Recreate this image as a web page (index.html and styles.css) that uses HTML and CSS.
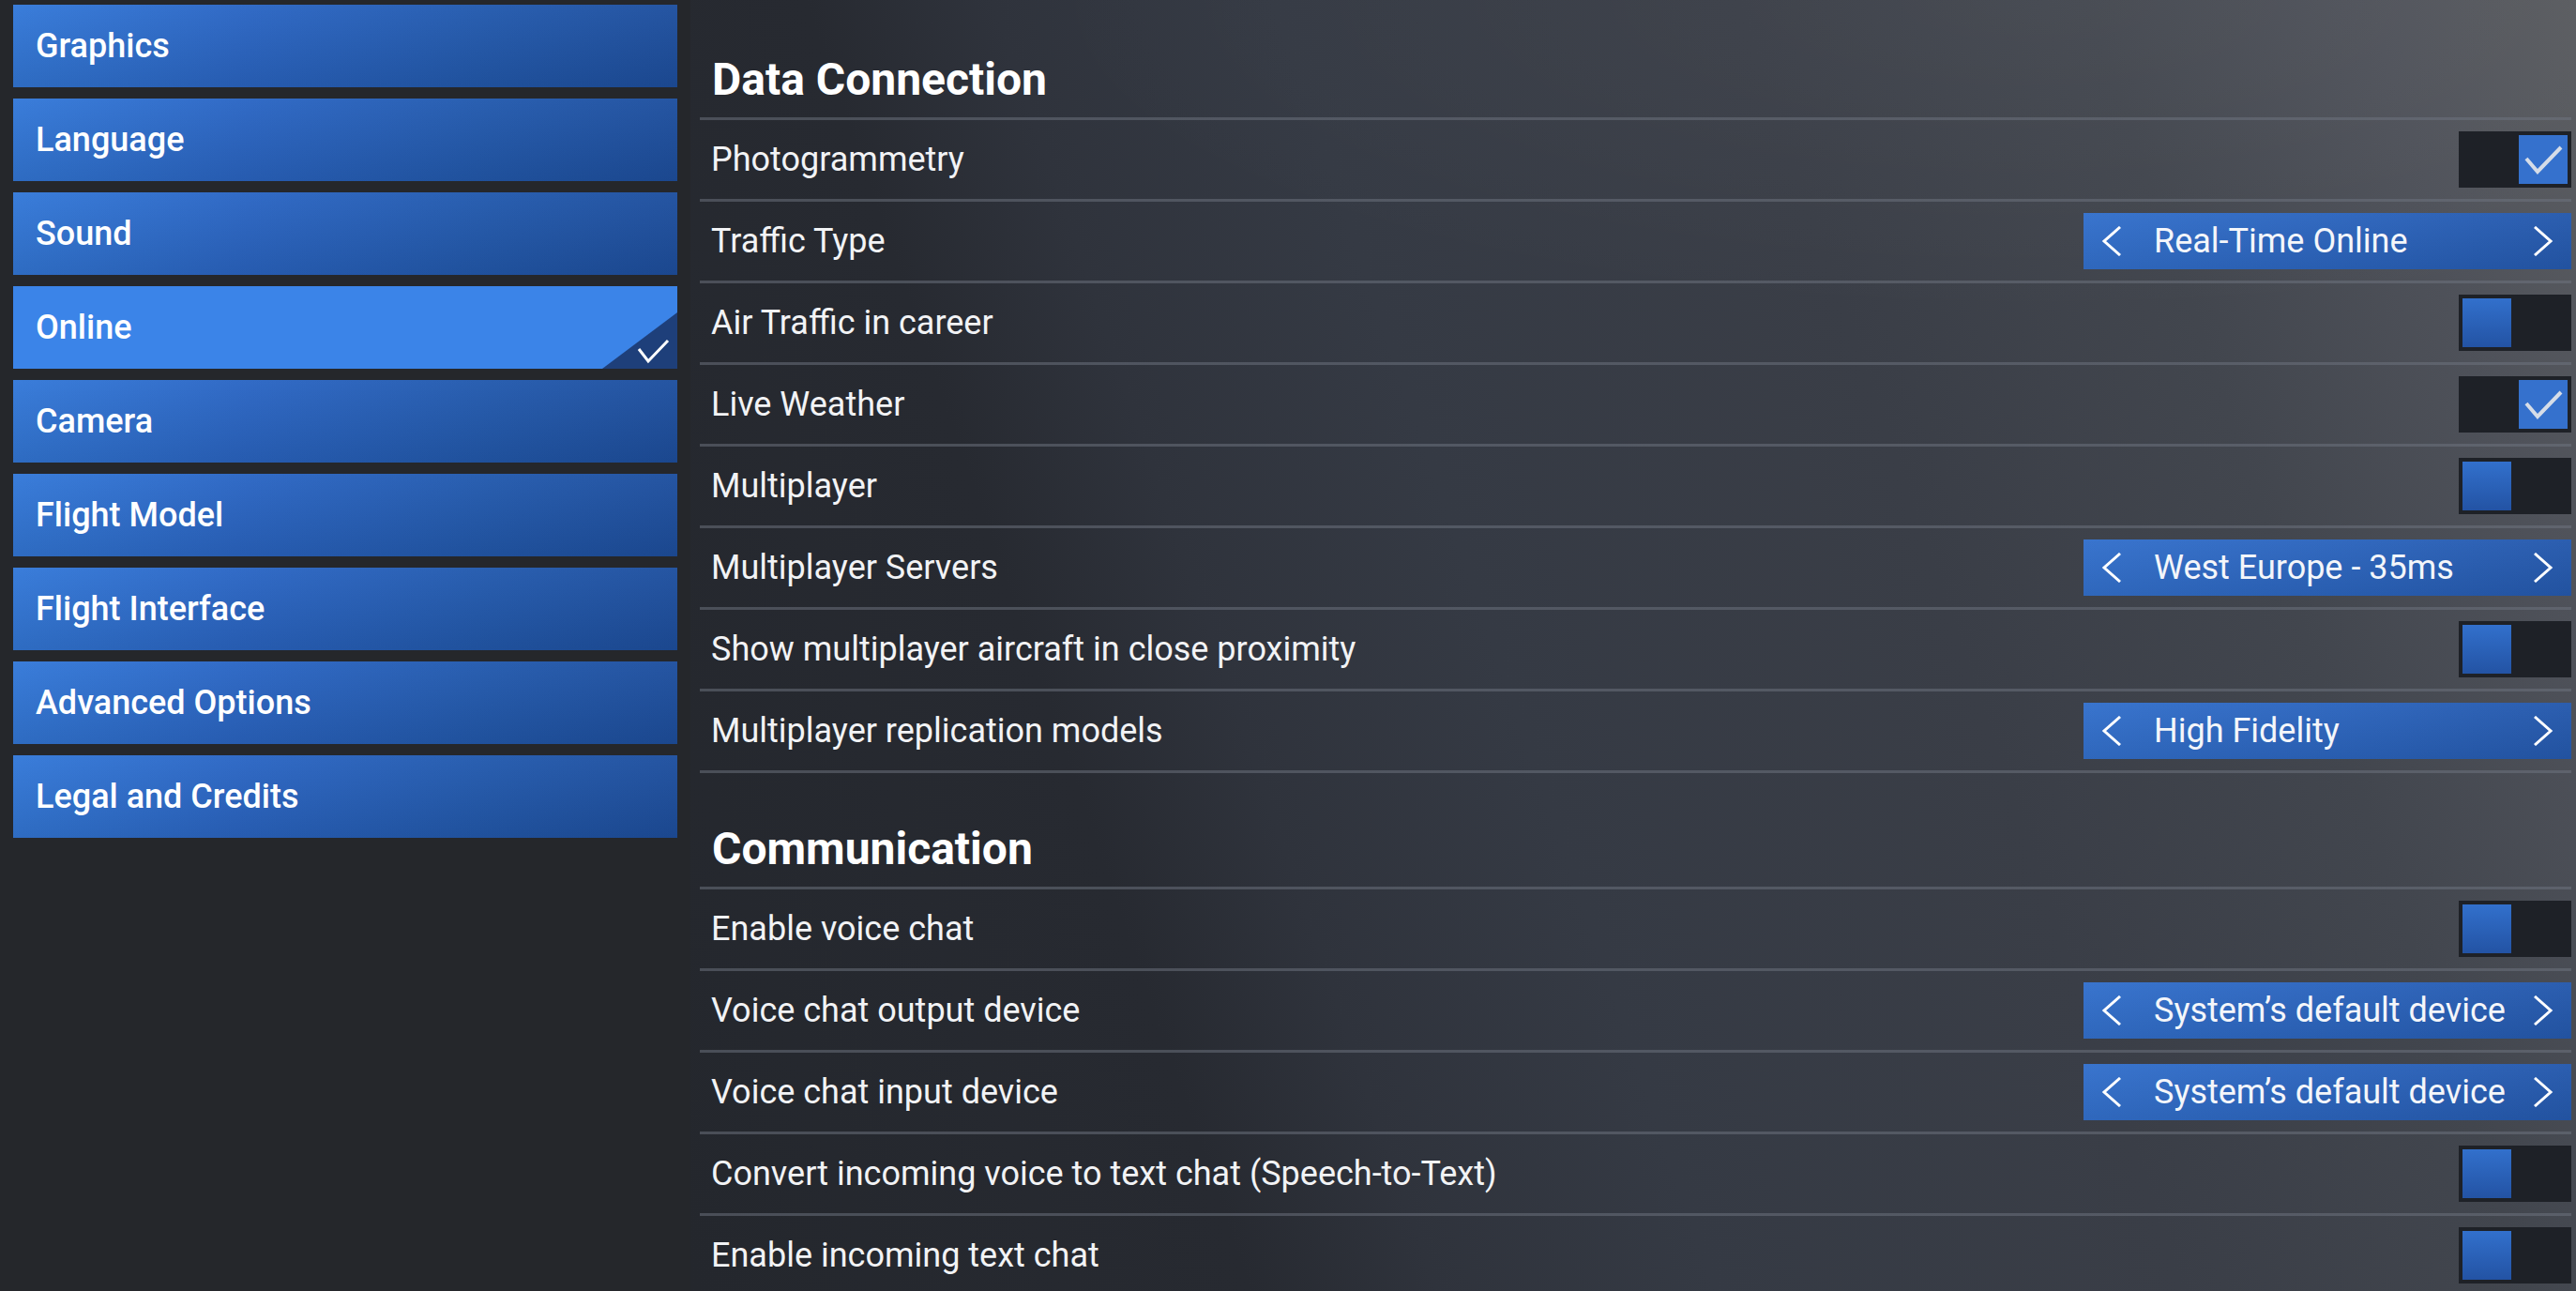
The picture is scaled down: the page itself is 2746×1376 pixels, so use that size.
FILE: index.html
```html
<!DOCTYPE html>
<html lang="en">
<head>
<meta charset="utf-8">
<title>Settings - Online</title>
<link rel="stylesheet" href="styles.css">
</head>
<body>
<div class="app">
  <nav class="sidebar">
    <div class="nav-item">Graphics</div>
    <div class="nav-item">Language</div>
    <div class="nav-item">Sound</div>
    <div class="nav-item active">Online
      <svg class="corner" width="80" height="60" viewBox="0 0 80 60"><polygon points="80,0 80,60 0,60" fill="#1e3f7a"/><polyline points="39,39 49,52 70,30" fill="none" stroke="#ffffff" stroke-width="3"/></svg>
    </div>
    <div class="nav-item">Camera</div>
    <div class="nav-item">Flight Model</div>
    <div class="nav-item">Flight Interface</div>
    <div class="nav-item">Advanced Options</div>
    <div class="nav-item">Legal and Credits</div>
  </nav>

  <main class="content">
    <section class="section">
      <h2 class="section-title">Data Connection</h2>
      <div class="row">
        <span class="label">Photogrammetry</span>
        <div class="toggle on"><span class="knob"><svg width="52" height="52" viewBox="0 0 52 52"><polyline points="8,25 20,39 45,13" fill="none" stroke="#d6dde8" stroke-width="4"/></svg></span></div>
      </div>
      <div class="row">
        <span class="label">Traffic Type</span>
        <div class="selector">
          <svg class="chev" width="22" height="32" viewBox="0 0 22 32"><polyline points="20,1 3,16 20,31" fill="none" stroke="#ffffff" stroke-width="3"/></svg>
          <span class="value">Real-Time Online</span>
          <svg class="chev" width="22" height="32" viewBox="0 0 22 32"><polyline points="2,1 19,16 2,31" fill="none" stroke="#ffffff" stroke-width="3"/></svg>
        </div>
      </div>
      <div class="row">
        <span class="label">Air Traffic in career</span>
        <div class="toggle"><span class="knob"></span></div>
      </div>
      <div class="row">
        <span class="label">Live Weather</span>
        <div class="toggle on"><span class="knob"><svg width="52" height="52" viewBox="0 0 52 52"><polyline points="8,25 20,39 45,13" fill="none" stroke="#d6dde8" stroke-width="4"/></svg></span></div>
      </div>
      <div class="row">
        <span class="label">Multiplayer</span>
        <div class="toggle"><span class="knob"></span></div>
      </div>
      <div class="row">
        <span class="label">Multiplayer Servers</span>
        <div class="selector">
          <svg class="chev" width="22" height="32" viewBox="0 0 22 32"><polyline points="20,1 3,16 20,31" fill="none" stroke="#ffffff" stroke-width="3"/></svg>
          <span class="value">West Europe - 35ms</span>
          <svg class="chev" width="22" height="32" viewBox="0 0 22 32"><polyline points="2,1 19,16 2,31" fill="none" stroke="#ffffff" stroke-width="3"/></svg>
        </div>
      </div>
      <div class="row">
        <span class="label">Show multiplayer aircraft in close proximity</span>
        <div class="toggle"><span class="knob"></span></div>
      </div>
      <div class="row">
        <span class="label">Multiplayer replication models</span>
        <div class="selector">
          <svg class="chev" width="22" height="32" viewBox="0 0 22 32"><polyline points="20,1 3,16 20,31" fill="none" stroke="#ffffff" stroke-width="3"/></svg>
          <span class="value">High Fidelity</span>
          <svg class="chev" width="22" height="32" viewBox="0 0 22 32"><polyline points="2,1 19,16 2,31" fill="none" stroke="#ffffff" stroke-width="3"/></svg>
        </div>
      </div>
    </section>

    <section class="section">
      <h2 class="section-title">Communication</h2>
      <div class="row">
        <span class="label">Enable voice chat</span>
        <div class="toggle"><span class="knob"></span></div>
      </div>
      <div class="row">
        <span class="label">Voice chat output device</span>
        <div class="selector">
          <svg class="chev" width="22" height="32" viewBox="0 0 22 32"><polyline points="20,1 3,16 20,31" fill="none" stroke="#ffffff" stroke-width="3"/></svg>
          <span class="value">System’s default device</span>
          <svg class="chev" width="22" height="32" viewBox="0 0 22 32"><polyline points="2,1 19,16 2,31" fill="none" stroke="#ffffff" stroke-width="3"/></svg>
        </div>
      </div>
      <div class="row">
        <span class="label">Voice chat input device</span>
        <div class="selector">
          <svg class="chev" width="22" height="32" viewBox="0 0 22 32"><polyline points="20,1 3,16 20,31" fill="none" stroke="#ffffff" stroke-width="3"/></svg>
          <span class="value">System’s default device</span>
          <svg class="chev" width="22" height="32" viewBox="0 0 22 32"><polyline points="2,1 19,16 2,31" fill="none" stroke="#ffffff" stroke-width="3"/></svg>
        </div>
      </div>
      <div class="row">
        <span class="label">Convert incoming voice to text chat (Speech-to-Text)</span>
        <div class="toggle"><span class="knob"></span></div>
      </div>
      <div class="row">
        <span class="label">Enable incoming text chat</span>
        <div class="toggle"><span class="knob"></span></div>
      </div>
    </section>
  </main>
</div>
</body>
</html>
```

FILE: styles.css
```css
* { box-sizing: border-box; }

html, body {
  margin: 0;
  padding: 0;
  width: 2746px;
  height: 1376px;
  overflow: hidden;
  background: #25272b;
  font-family: Roboto, "Liberation Sans", sans-serif;
  color: #ffffff;
}

.app {
  display: flex;
  width: 2746px;
  height: 1376px;
}

.sidebar {
  flex: 0 0 736px;
  background: #25272b;
  padding: 5px 14px 0 14px;
  display: flex;
  flex-direction: column;
  gap: 12px;
}

.nav-item {
  position: relative;
  height: 88px;
  width: 708px;
  padding-left: 24px;
  display: flex;
  align-items: center;
  font-size: 36px;
  font-weight: 500;
  color: #ffffff;
  background:
    linear-gradient(to bottom, rgba(255,255,255,0.03), rgba(0,0,0,0.10)),
    linear-gradient(100deg, #3479d9 0%, #2b66c4 35%, #235aae 70%, #1e4f9e 100%);
}

.nav-item.active {
  background: #3b84e8;
}

.corner {
  position: absolute;
  right: 0;
  bottom: 0;
  display: block;
}

.content {
  flex: 1;
  padding: 6px 5px 0 10px;
  background:
    radial-gradient(ellipse 55% 25% at 72% 0%, rgba(255,255,255,0.04), rgba(255,255,255,0) 100%),
    linear-gradient(71deg, #24272d 0%, #272a31 24%, #2f333c 32%, #353a44 44%, #3a3e47 64%, #42464e 79%, #4f525a 91%, #5a5c60 100%);
}

.section + .section {
  margin-top: 2px;
}

.section-title {
  margin: 0;
  padding: 51px 0 12px 13px;
  font-size: 48px;
  line-height: 56px;
  font-weight: 700;
  color: #ffffff;
  border-bottom: 3px solid rgba(112, 118, 130, 0.5);
}

.row {
  height: 87px;
  display: flex;
  align-items: center;
  justify-content: space-between;
  padding-left: 12px;
  border-bottom: 3px solid rgba(112, 118, 130, 0.5);
}

.label {
  font-size: 36px;
  line-height: 84px;
  color: #f2f3f5;
}

.toggle {
  width: 120px;
  height: 60px;
  padding: 4px;
  background: #1e2127;
  display: flex;
  justify-content: flex-start;
}

.toggle.on {
  justify-content: flex-end;
}

.knob {
  width: 52px;
  height: 52px;
  display: block;
  background: linear-gradient(to bottom, #3270cc, #2353a4);
}

.toggle.on .knob {
  background: #3571cd;
}

.knob svg {
  display: block;
}

.selector {
  width: 520px;
  height: 60px;
  padding: 0 19px 0 19px;
  display: flex;
  align-items: center;
  background:
    linear-gradient(to bottom, rgba(255,255,255,0.03), rgba(0,0,0,0.08)),
    linear-gradient(to right, #3370cc 0%, #2c65be 50%, #2559ad 100%);
}

.chev {
  display: block;
  flex: 0 0 auto;
}

.value {
  flex: 1;
  margin-left: 34px;
  font-size: 36px;
  line-height: 60px;
  color: #f4f6fa;
  white-space: nowrap;
}
```
